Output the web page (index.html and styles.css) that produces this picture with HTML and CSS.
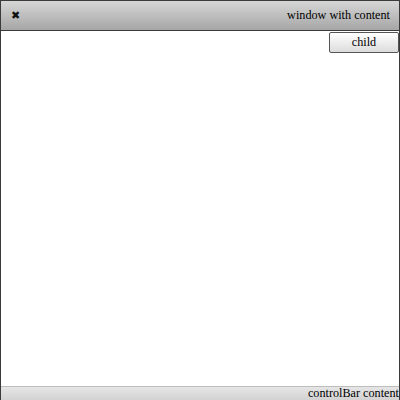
FILE: index.html
```html
<!DOCTYPE html>
<html>
<head>
<meta charset="utf-8">
<link rel="stylesheet" href="styles.css">
</head>
<body>
<div class="window">
  <div class="titlebar">
    <span class="close">&#x2716;</span>
    <span class="title">window with content</span>
  </div>
  <div class="content">
    <button class="child">child</button>
  </div>
  <div class="controlbar">controlBar content</div>
</div>
</body>
</html>
```
FILE: styles.css
```css
html, body {
  margin: 0;
  padding: 0;
  background: #fff;
}
.window {
  width: 400px;
  height: 400px;
  box-sizing: border-box;
  border: 1px solid #3a3a3a;
  border-bottom: none;
  display: flex;
  flex-direction: column;
  font-family: "Liberation Serif", serif;
  font-size: 12px;
  color: #000;
}
.titlebar {
  height: 29px;
  border-bottom: 1px solid #3a3a3a;
  background: linear-gradient(#d6d6d6, #a6a6a6);
  display: flex;
  align-items: center;
  justify-content: space-between;
  padding: 0 9px 0 10px;
}
.close {
  font-size: 11px;
  font-family: "DejaVu Sans", sans-serif;
  color: #111;
  font-weight: bold;
}
.title {
  font-size: 12.2px;
}
.content {
  flex: 1;
  display: flex;
  flex-direction: column;
  align-items: flex-end;
  padding-top: 1px;
}
.child {
  width: 70px;
  height: 21px;
  border: 1px solid #555;
  border-radius: 2px;
  background: linear-gradient(#ffffff, #dcdcdc);
  font-family: "Liberation Serif", serif;
  font-size: 12.2px;
  color: #000;
  padding: 0;
  margin: 0;
}
.controlbar {
  height: 13px;
  border-top: 1px solid #bdbdbd;
  background: linear-gradient(#e6e6e6, #d2d2d2);
  text-align: right;
  line-height: 13px;
  font-size: 12.2px;
}
```
